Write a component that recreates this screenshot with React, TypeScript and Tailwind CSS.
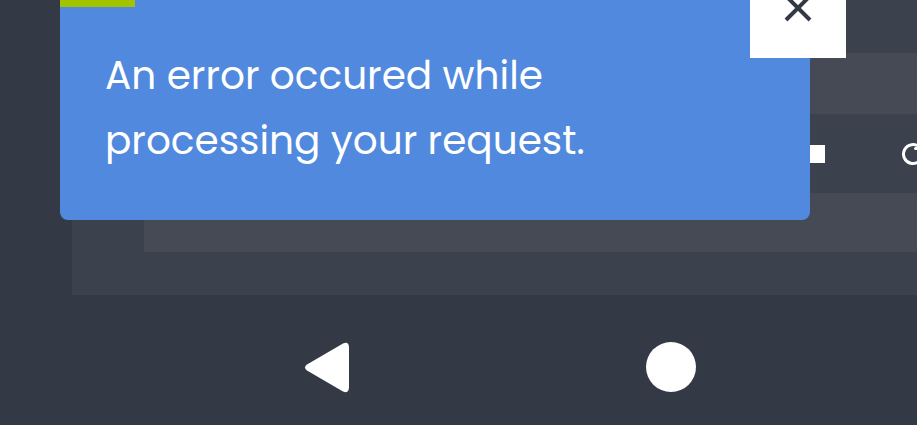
export default function App() {
  return (
    <div className="relative w-[917px] h-[425px] overflow-hidden bg-[#343a45] flex flex-col" style={{ fontFamily: "Poppins, Inter, 'Noto Sans', sans-serif" }}>
      {/* page behind the toast */}
      <div className="ml-[72px] h-[295px] bg-[#3c424d] flex flex-col">
        <div className="h-[53px]" />
        <div className="ml-[72px] h-[61px] bg-[#454a55]" />
        <div className="h-[79px] flex items-center">
          <div className="ml-[735px] w-[18px] h-[18px] shrink-0 bg-white" />
          <svg className="ml-[75px] shrink-0" width="26" height="26" viewBox="0 0 26 26" fill="none" stroke="white" strokeWidth="3" strokeLinecap="round" strokeLinejoin="round">
            <path d="M22.5 13a9.5 9.5 0 1 1-3-6.9" />
            <path d="M20.5 2.5v5h-5" />
          </svg>
        </div>
        <div className="ml-[72px] h-[59px] bg-[#454a55]" />
      </div>

      {/* nav bar */}
      <div className="flex-1 flex items-center pt-[14px]">
        <svg className="ml-[303px]" width="46" height="51" viewBox="0 0 46 51">
          <path d="M40 1.5 Q46 -1 46 6 L46 45 Q46 52 40 49.5 L4 28.5 Q0 25.5 4 22.5 Z" fill="white" />
        </svg>
        <div className="ml-[297px] w-[50px] h-[50px] rounded-full bg-white" />
      </div>

      {/* toast */}
      <div className="absolute left-[60px] -top-[10px] w-[750px] h-[230px] rounded-lg bg-[#5089dd] pt-[53px] pl-[45px]">
        <div className="absolute left-0 top-0 w-[75px] h-[17px] bg-[#a3c300]" />
        <p className="text-white text-[39px] leading-[65px]">
          An error occured while
          <br />
          processing your request.
        </p>
      </div>
      <button className="absolute left-[750px] top-0 w-[96px] h-[58px] bg-white flex justify-center">
        <svg className="-mt-[6px]" width="28" height="28" viewBox="0 0 28 28" stroke="#343a45" strokeWidth="4">
          <path d="M2 2 L26 26 M26 2 L2 26" />
        </svg>
      </button>
    </div>
  );
}
